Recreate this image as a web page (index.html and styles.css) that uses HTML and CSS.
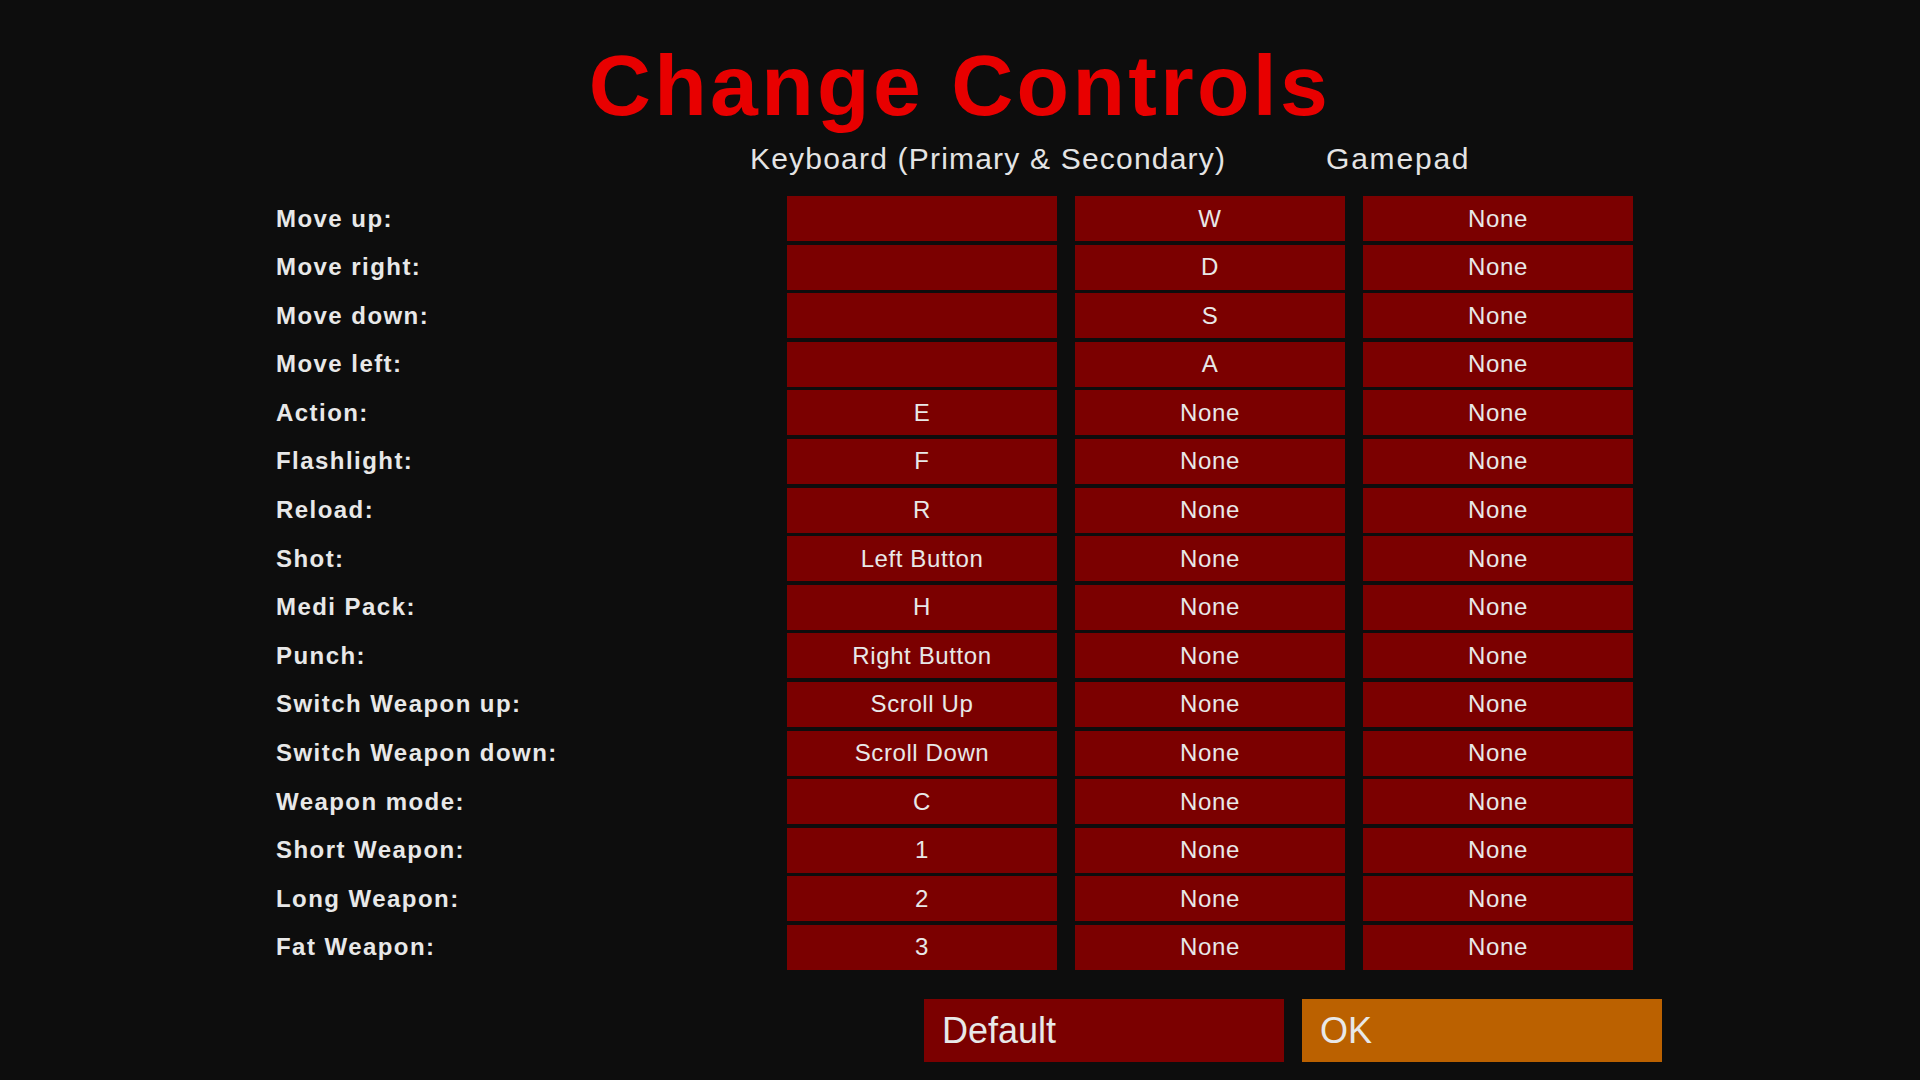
FILE: index.html
```html
<!DOCTYPE html>
<html lang="en">
<head>
<meta charset="utf-8">
<title>Change Controls</title>
<link rel="stylesheet" href="styles.css">
</head>
<body>
<main class="screen">
  <h1 class="title">Change Controls</h1>

  <div class="heads">
    <div class="head head-keyboard">Keyboard (Primary &amp; Secondary)</div>
    <div class="head head-gamepad">Gamepad</div>
  </div>

  <div class="bindings">
    <div class="label">Move up:</div><div class="key"></div><div class="key">W</div><div class="key">None</div>
    <div class="label">Move right:</div><div class="key"></div><div class="key">D</div><div class="key">None</div>
    <div class="label">Move down:</div><div class="key"></div><div class="key">S</div><div class="key">None</div>
    <div class="label">Move left:</div><div class="key"></div><div class="key">A</div><div class="key">None</div>
    <div class="label">Action:</div><div class="key">E</div><div class="key">None</div><div class="key">None</div>
    <div class="label">Flashlight:</div><div class="key">F</div><div class="key">None</div><div class="key">None</div>
    <div class="label">Reload:</div><div class="key">R</div><div class="key">None</div><div class="key">None</div>
    <div class="label">Shot:</div><div class="key">Left Button</div><div class="key">None</div><div class="key">None</div>
    <div class="label">Medi Pack:</div><div class="key">H</div><div class="key">None</div><div class="key">None</div>
    <div class="label">Punch:</div><div class="key">Right Button</div><div class="key">None</div><div class="key">None</div>
    <div class="label">Switch Weapon up:</div><div class="key">Scroll Up</div><div class="key">None</div><div class="key">None</div>
    <div class="label">Switch Weapon down:</div><div class="key">Scroll Down</div><div class="key">None</div><div class="key">None</div>
    <div class="label">Weapon mode:</div><div class="key">C</div><div class="key">None</div><div class="key">None</div>
    <div class="label">Short Weapon:</div><div class="key">1</div><div class="key">None</div><div class="key">None</div>
    <div class="label">Long Weapon:</div><div class="key">2</div><div class="key">None</div><div class="key">None</div>
    <div class="label">Fat Weapon:</div><div class="key">3</div><div class="key">None</div><div class="key">None</div>
  </div>

  <div class="actions">
    <button class="btn btn-default">Default</button>
    <button class="btn btn-ok">OK</button>
  </div>
</main>
</body>
</html>
```

FILE: styles.css
```css
html, body {
  margin: 0;
  padding: 0;
  background: #0d0d0d;
}

.screen {
  width: 1920px;
  height: 1080px;
  overflow: hidden;
  font-family: "Liberation Sans", Arial, sans-serif;
  color: #e8e8e8;
}

.title {
  margin: 0;
  padding-top: 35px;
  font-size: 86px;
  line-height: 100px;
  font-weight: bold;
  letter-spacing: 3.3px;
  text-align: center;
  color: #e80000;
}

/* column headers share the table's column grid */
.heads {
  display: grid;
  grid-template-columns: 493px 270px 270px 270px;
  column-gap: 18px;
  padding-left: 276px;
  margin-top: 6px;
  height: 36px;
  font-size: 30px;
  line-height: 36px;
  letter-spacing: 1.2px;
  color: #e4e4e4;
  white-space: nowrap;
}

.head-keyboard {
  grid-column: 2 / span 2;
  margin-left: -37px;
}

.head-gamepad {
  grid-column: 4;
  margin-left: -37px;
  letter-spacing: 1.8px;
}

.bindings {
  display: grid;
  grid-template-columns: 493px 270px 270px 270px;
  grid-auto-rows: 45px;
  column-gap: 18px;
  row-gap: 3.6px;
  padding-left: 276px;
  margin-top: 19px;
}

.label {
  display: flex;
  align-items: center;
  font-size: 24px;
  font-weight: bold;
  letter-spacing: 1.45px;
  white-space: nowrap;
}

.key {
  display: flex;
  align-items: center;
  justify-content: center;
  background: #7b0000;
  font-size: 24px;
  letter-spacing: 0.6px;
  white-space: nowrap;
}

.actions {
  display: flex;
  gap: 18px;
  padding-left: 924px;
  margin-top: 29px;
}

.btn {
  width: 360px;
  height: 63px;
  border: 0;
  margin: 0;
  padding: 2px 0 0 18px;
  text-align: left;
  font-family: "Liberation Sans", Arial, sans-serif;
  font-size: 36px;
  color: #e8e8e8;
  cursor: pointer;
}

.btn-default {
  background: #7b0000;
}

.btn-ok {
  background: #bb6100;
}
```
